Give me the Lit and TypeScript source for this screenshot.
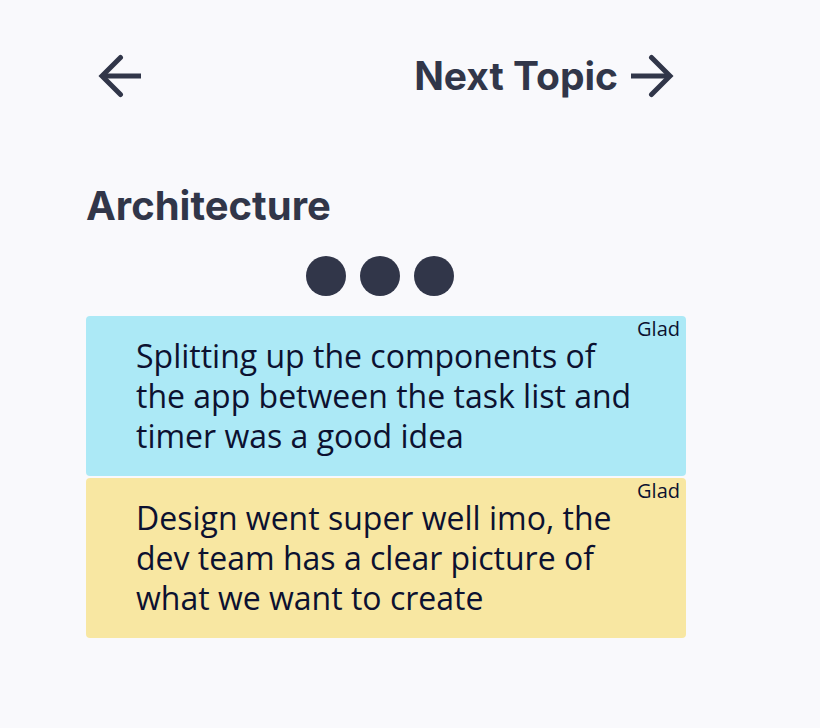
import { LitElement, html, css, svg } from "lit";
import { customElement, property, state } from "lit/decorators.js";
import { classMap } from "lit/directives/class-map.js";

type Tone = "blue" | "yellow";

interface Note {
  text: string;
  mood: string;
  tone: Tone;
}

@customElement("retro-note")
export class RetroNote extends LitElement {
  @property() mood = "";
  @property() tone: Tone = "blue";

  static styles = css`
    :host {
      display: block;
    }
    .note {
      position: relative;
      box-sizing: border-box;
      padding: 20px 50px;
      border-radius: 4px;
      color: #0c1130;
    }
    .blue {
      background: #ace9f6;
    }
    .yellow {
      background: #f8e7a2;
    }
    .text {
      margin: 0;
      font-size: 32px;
      line-height: 40px;
    }
    .mood {
      position: absolute;
      top: 0;
      right: 6px;
      font-size: 20px;
      line-height: 26px;
    }
  `;

  render() {
    return html`
      <article class=${classMap({ note: true, [this.tone]: true })}>
        <span class="mood">${this.mood}</span>
        <p class="text"><slot></slot></p>
      </article>
    `;
  }
}

@customElement("app-root")
export class AppRoot extends LitElement {
  @state() private notes: Note[] = [
    {
      text: "Splitting up the components of the app between the task list and timer was a good idea",
      mood: "Glad",
      tone: "blue",
    },
    {
      text: "Design went super well imo, the dev team has a clear picture of what we want to create",
      mood: "Glad",
      tone: "yellow",
    },
  ];

  static styles = css`
    :host {
      display: block;
      box-sizing: border-box;
      min-height: 100vh;
      padding: 52px 134px 52px 86px;
      background: #f9f9fc;
      color: #313649;
      font-family: "Open Sans", "Noto Sans", sans-serif;
    }
    .topics {
      display: flex;
      align-items: center;
      justify-content: space-between;
      padding: 0 12px;
    }
    .nav {
      display: flex;
      align-items: center;
      gap: 12px;
      padding: 0;
      border: 0;
      background: none;
      color: inherit;
      cursor: pointer;
    }
    .nav,
    .title {
      font-family: Inter, sans-serif;
      font-weight: 700;
      line-height: 48px;
    }
    .nav {
      font-size: 39px;
    }
    .arrow {
      display: block;
      width: 44px;
      height: 44px;
      fill: none;
      stroke: currentColor;
      stroke-width: 5;
    }
    .title {
      margin: 82px 0 26px;
      font-size: 40px;
    }
    .dots {
      display: flex;
      justify-content: center;
      gap: 14px;
      margin: 0 12px 20px 0;
    }
    .dot {
      width: 40px;
      height: 40px;
      border-radius: 50%;
      background: #313649;
    }
    .notes {
      display: grid;
      gap: 2px;
    }
  `;

  private arrow(direction: "left" | "right") {
    const shape =
      direction === "left"
        ? svg`<path d="M5 22H43" /><path d="M22.5 3.5L4 22L22.5 40.5" stroke-linecap="round" stroke-linejoin="miter" />`
        : svg`<path d="M1 22H39" /><path d="M21.5 3.5L40 22L21.5 40.5" stroke-linecap="round" stroke-linejoin="miter" />`;
    return html`<svg class="arrow" viewBox="0 0 44 44" aria-hidden="true">${shape}</svg>`;
  }

  render() {
    return html`
      <nav class="topics">
        <button class="nav" aria-label="Previous topic">${this.arrow("left")}</button>
        <button class="nav">Next Topic ${this.arrow("right")}</button>
      </nav>
      <main>
        <h1 class="title">Architecture</h1>
        <div class="dots">
          <span class="dot"></span>
          <span class="dot"></span>
          <span class="dot"></span>
        </div>
        <section class="notes">
          ${this.notes.map(
            (note) => html`<retro-note .mood=${note.mood} .tone=${note.tone}>${note.text}</retro-note>`
          )}
        </section>
      </main>
    `;
  }
}
